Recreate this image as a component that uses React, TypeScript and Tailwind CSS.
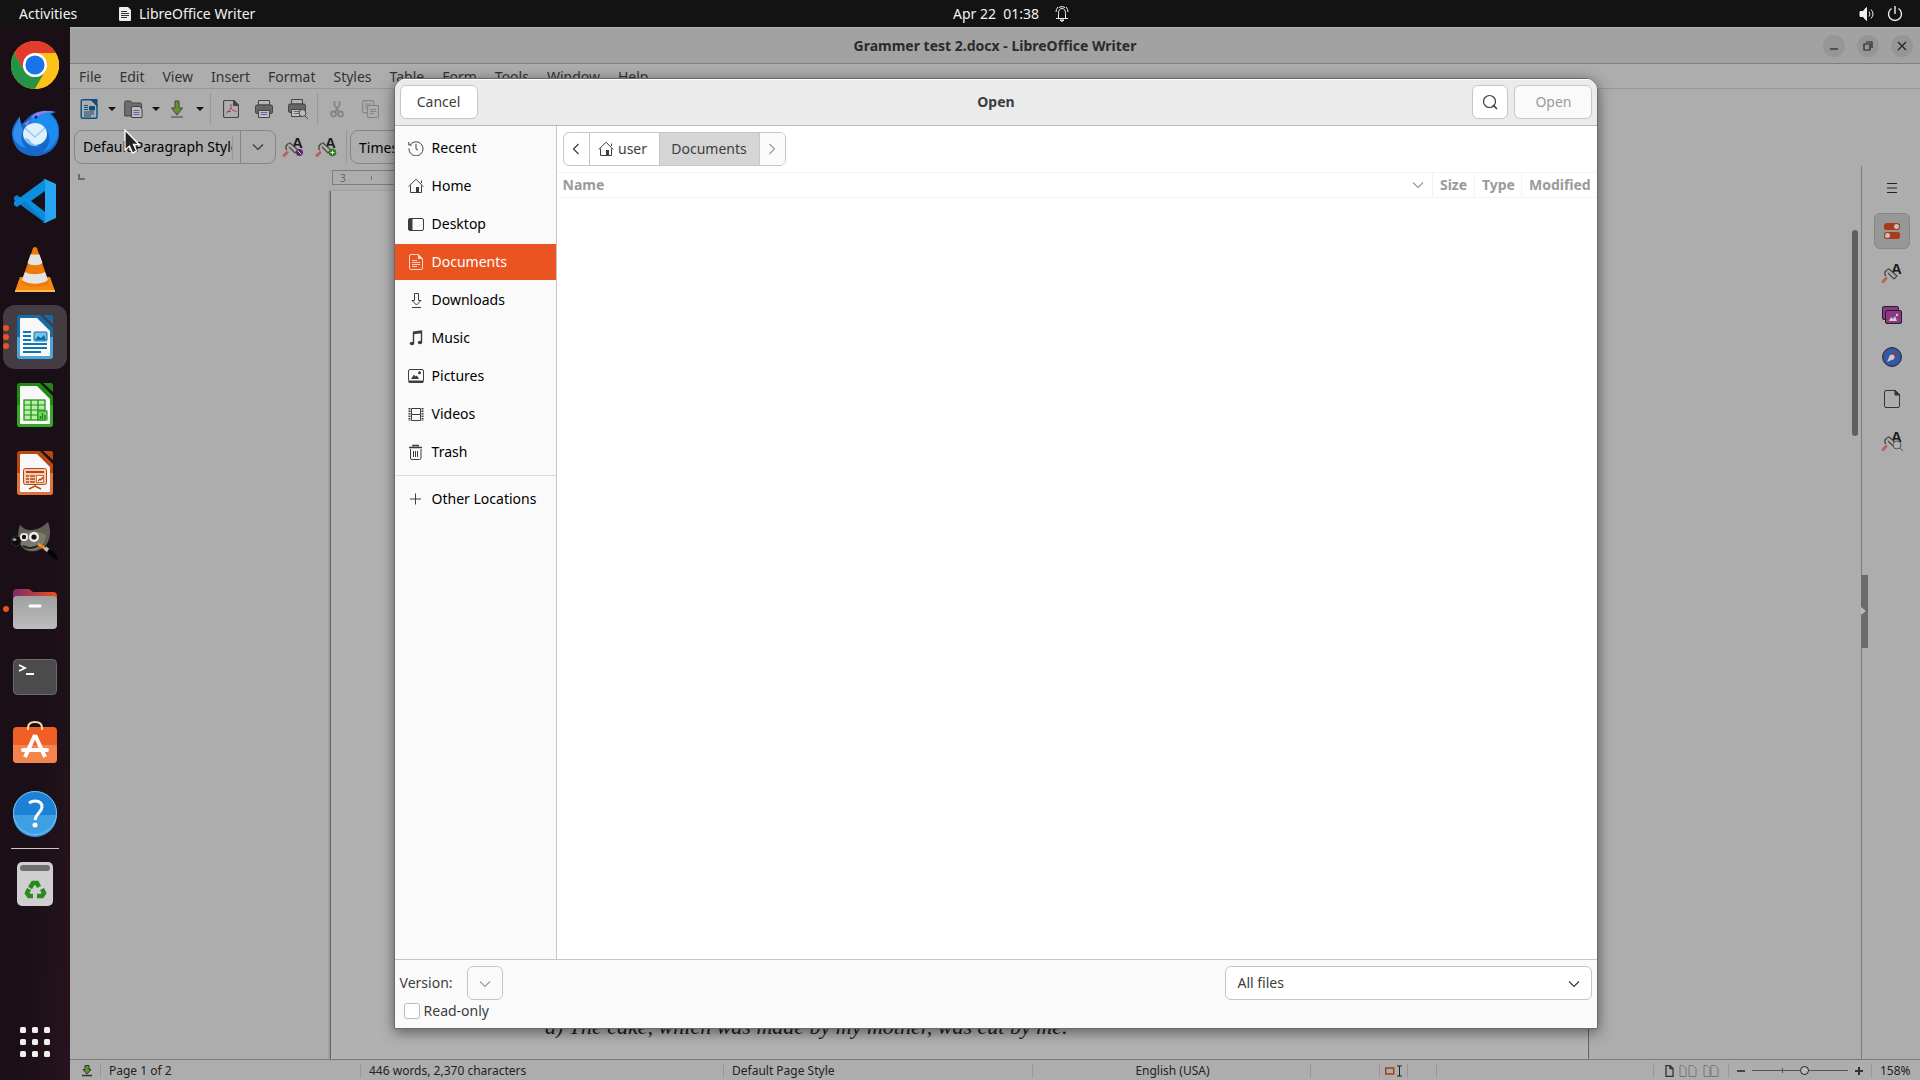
import type { ReactNode } from "react";

const menus = ["File", "Edit", "View", "Insert", "Format", "Styles", "Table", "Form", "Tools", "Window", "Help"];

/* ---------- dock icons, 48x48 ---------- */

const Chrome = () => (
  <svg viewBox="0 0 48 48" className="size-12">
    <circle cx="24" cy="24" r="24" fill="#fbbc05" />
    <path d="M3.2 12A24 24 0 0 1 44.8 12H24a12 12 0 0 0-10.4 18z" fill="#e33b2e" />
    <path d="M3.2 12A24 24 0 0 0 24 48L34.4 30A12 12 0 0 1 13.6 30z" fill="#269447" />
    <path d="M24 12H44.8A24 24 0 0 1 24 48L34.4 30A12 12 0 0 0 24 12z" fill="#fdc21a" />
    <circle cx="24" cy="24" r="12" fill="#fff" />
    <circle cx="24" cy="24" r="9.6" fill="#1a73e8" />
  </svg>
);

const Thunderbird = () => (
  <svg viewBox="0 0 48 48" className="size-12">
    <path d="M1 26C0 19 5 12 9 7c0 4 0 6 2 8l8-8C26 1 36 1 45 3l-5 2c7 5 9 14 8 21-1 13-12 21-24 21C11 47 2 39 1 26z" fill="#1669c9" />
    <path d="M20 10c5-7 15-9 24-7l-6 2c8 5 10 14 9 21-1 8-8 15-15 17 6-5 8-13 5-20-3-6-8-9-17-9z" fill="#1d8cf0" />
    <path d="M20 9c4-7 14-8 24-6-7 0-14 1-18 5z" fill="#9b7bf0" />
    <path d="M2 26c1-8 4-13 7-17 0 5 1 9 3 12-3 6-2 13 3 18C7 37 3 32 2 26z" fill="#2f8ff0" />
    <path d="M13 15l7-5-4 7z" fill="#8f7df0" />
    <circle cx="25" cy="8" r="1.6" fill="#0b2b5c" />
    <ellipse cx="24" cy="25" rx="12" ry="11" fill="#dff0fd" />
    <path d="M14 19l10 9 10-9" fill="none" stroke="#9cc8ee" strokeWidth="1.6" />
    <path d="M13 29c2 6 8 9 15 8-7-2-9-4-10-7z" fill="#7cc4f8" />
  </svg>
);

const VsCode = () => (
  <svg viewBox="0 0 48 48" className="size-12">
    <path d="M35 3L14 24 6 18l-3 2v3l30 22 2 1z" fill="#0a7fcb" />
    <path d="M35 45L14 24l-8 6-3-2v-3L33 3l2-1z" fill="#0a8fdd" />
    <path d="M34 14L20 24l14 11z" fill="#1a0f17" />
    <path d="M34 2l11 5v34l-11 5c-1 0-2 0-3-1 2 1 4 0 4-2V5c0-2-2-3-4-2 1-1 2-1 3-1z" fill="#27a4f2" />
    <path d="M34 3h1v42h-1z" fill="#27a4f2" />
  </svg>
);

const Vlc = () => (
  <svg viewBox="0 0 48 48" className="size-12">
    <path d="M9 32h30l5 14H4z" fill="#f58a12" />
    <path d="M4 45h40v2H4z" fill="#ffb84d" />
    <path d="M22 3q2-2 4 0l12 35c-5 5-23 5-28 0z" fill="#ee7a0a" />
    <path d="M19.500 9.500h9l3 8.500c-4 3-11 3-15 0z" fill="#e4e4e4" />
    <path d="M14 27c5 3 15 3 20 0l3 8c-6 5-20 5-26 0z" fill="#e4e4e4" />
  </svg>
);

type DocProps = { dark: string; light: string; children: ReactNode };

const OfficeDoc = ({ dark, light, children }: DocProps) => (
  <svg viewBox="0 0 48 48" className="size-12">
    <path d="M9 2h20l13 13v28q0 3-3 3H9q-3 0-3-3V5q0-3 3-3z" fill={dark} />
    <path d="M6 24h36v19q0 3-3 3H9q-3 0-3-3z" fill={light} />
    <path d="M10 5h16l13 13v24q0 1-1 1H10q-1 0-1-1V6q0-1 1-1z" fill="#f8f8f8" />
    <path d="M32 2h8q2 0 2 2v7z" fill={dark} />
    {children}
  </svg>
);

const Writer = () => (
  <OfficeDoc dark="#0f6ea8" light="#4aa5dc">
    <path d="M12 19h8M12 23h8M12 27h8M12 31h24M12 35h24M12 39h18" stroke="#0f75b5" strokeWidth="2" />
    <rect x="23" y="19" width="13" height="9" rx="1" fill="#78c0ea" stroke="#0f6ea8" />
    <path d="M24 27l3-4 3 2 3-3 2 5z" fill="#0f6ea8" />
  </OfficeDoc>
);

const Calc = () => (
  <OfficeDoc dark="#1f8a14" light="#35a824">
    <rect x="13" y="19" width="21" height="20" fill="#b4f0a6" stroke="#1f8a14" strokeWidth="1.2" />
    <path d="M13 24h21M13 29h21M13 34h21M20 19v20M27 19v20" stroke="#1f8a14" strokeWidth="1.2" />
    <rect x="27" y="30" width="9" height="9" fill="#7ed66c" stroke="#1f8a14" />
    <path d="M29.500 38v-3M31.500 38v-6M34 38v-4" stroke="#1f8a14" strokeWidth="1.500" />
  </OfficeDoc>
);

const Impress = () => (
  <OfficeDoc dark="#b8480f" light="#e27338">
    <rect x="12.500" y="19.500" width="23" height="16" rx="2" fill="#f6c9b0" stroke="#b04a12" />
    <path d="M15 23h18" stroke="#b04a12" strokeWidth="2" />
    <path d="M15 27h3M19 27h5M15 30h3M19 30h5M15 33h3M19 33h5" stroke="#b04a12" strokeWidth="1.600" />
    <rect x="25.500" y="26.500" width="7" height="7" fill="#fff" stroke="#d06a30" />
    <path d="M27 32l2-2 1 1 2-3M24 36v2M18 40l6-3 6 3" fill="none" stroke="#b04a12" strokeWidth="1.400" />
  </OfficeDoc>
);

const Gimp = () => (
  <svg viewBox="0 0 48 48" className="size-12">
    <path d="M9 8c3 3 6 5 10 5 6 0 12-2 18-8 3 8 3 17-2 23-6 7-16 8-22 4-5-4-8-13-4-24z" fill="#635f55" />
    <path d="M12 17c8-4 16-3 23 1-1 9-5 13-11 15-6 1-12-2-14-6z" fill="#7c786c" />
    <ellipse cx="5" cy="24" rx="5" ry="5" fill="#0c0c0c" stroke="#444" strokeWidth=".6" />
    <ellipse cx="3.500" cy="22.500" rx="2" ry="1.500" fill="#8d989e" />
    <circle cx="13" cy="20" r="4" fill="#eee" />
    <circle cx="23" cy="20" r="5" fill="#eee" />
    <circle cx="13" cy="20" r="2.200" fill="#111" />
    <circle cx="23" cy="20" r="2.600" fill="#111" />
    <path d="M12 29c6 3 12 2 16-1" stroke="#222" strokeWidth="2" fill="none" />
    <path d="M27 27l8 5" stroke="#ee8a1a" strokeWidth="3" />
    <path d="M34 31l5 4" stroke="#bdbdbd" strokeWidth="4" />
    <path d="M38 32c4 1 8 5 9 11-5-1-9-4-11-8z" fill="#050505" />
  </svg>
);

const Files = () => (
  <svg viewBox="0 0 48 48" className="size-12">
    <defs>
      <linearGradient id="tab">
        <stop offset="0" stopColor="#7d2c63" />
        <stop offset="1" stopColor="#e9521f" />
      </linearGradient>
      <linearGradient id="front" x2="0" y2="1">
        <stop offset="0" stopColor="#a0a0a0" />
        <stop offset="1" stopColor="#bdbdbd" />
      </linearGradient>
    </defs>
    <path d="M2 20V8q0-4 4-4h12l4 3h20q4 0 4 4v10z" fill="url(#tab)" />
    <rect x="2" y="11" width="44" height="33" rx="4" fill="url(#front)" />
    <path d="M19 21h10" stroke="#fff" strokeWidth="3" strokeLinecap="round" />
  </svg>
);

const Terminal = () => (
  <svg viewBox="0 0 48 48" className="size-12">
    <rect x="2.500" y="6.500" width="43" height="35" rx="4" fill="#4b4b4b" stroke="#6c6c6c" />
    <path d="M8 12l6 3-6 3M15 21h8" fill="none" stroke="#fff" strokeWidth="1.800" />
  </svg>
);

const Software = () => (
  <svg viewBox="0 0 48 48" className="size-12">
    <path d="M6 6h36q4 0 4 4v28q0 4-4 4H6q-4 0-4-4V10q0-4 4-4z" fill="#f06024" />
    <path d="M2 24h44v14q0 4-4 4H6q-4 0-4-4z" fill="#f5834d" />
    <path d="M17 9V7q0-6 7-6t7 6v2" fill="none" stroke="#f5dca6" strokeWidth="2" />
    <path d="M24 14L14 36M24 14l10 22" stroke="#fff" strokeWidth="4" />
    <path d="M12 29h24" stroke="#fff" strokeWidth="4" strokeLinecap="round" />
  </svg>
);

const HelpIcon = () => (
  <svg viewBox="0 0 48 48" className="size-12">
    <circle cx="24" cy="24" r="22" fill="#1c82d8" />
    <path d="M2 26h44a22 22 0 0 1-44 0z" fill="#3f9fe3" />
    <circle cx="24" cy="24" r="21.500" fill="none" stroke="#7cc0ef" />
    <path d="M18 14q3-2 6-2 7 0 7 6c0 5-6 6-7 13" fill="none" stroke="#fff" strokeWidth="3" />
    <circle cx="24" cy="36" r="2.500" fill="#fff" />
  </svg>
);

const TrashCan = () => (
  <svg viewBox="0 0 48 48" className="size-12">
    <rect x="6" y="1" width="36" height="44" rx="5" fill="#cfcfcf" />
    <rect x="9" y="4" width="30" height="6" rx="3" fill="#6e6e6e" />
    <g fill="none" stroke="#2a8a1e" strokeWidth="4.500">
      <path d="M19 27l3-5h4l2 4" />
      <path d="M31 28l2 4-2 3h-5" />
      <path d="M22 35h-4l-2-3 2-4" />
    </g>
  </svg>
);

const AppGrid = () => (
  <svg viewBox="0 0 30 30" className="size-[30px]" fill="#f2f0ee">
    {[0, 12, 24].map((y) => [0, 12, 24].map((x) => <rect key={`${x}-${y}`} x={x} y={y} width="6" height="6" rx="1.500" />))}
  </svg>
);

const dock = [
  { name: "Google Chrome", icon: <Chrome /> },
  { name: "Thunderbird Mail", icon: <Thunderbird /> },
  { name: "Visual Studio Code", icon: <VsCode /> },
  { name: "VLC media player", icon: <Vlc /> },
  { name: "LibreOffice Writer", icon: <Writer />, windows: 3, active: true },
  { name: "LibreOffice Calc", icon: <Calc /> },
  { name: "LibreOffice Impress", icon: <Impress /> },
  { name: "GIMP", icon: <Gimp /> },
  { name: "Files", icon: <Files />, windows: 1 },
  { name: "Terminal", icon: <Terminal /> },
  { name: "Ubuntu Software", icon: <Software /> },
  { name: "Help", icon: <HelpIcon /> },
];

/* ---------- small shared icons ---------- */

const Chevron = ({ className }: { className: string }) => (
  <svg viewBox="0 0 12 8" className={className} fill="none" stroke="currentColor" strokeWidth="1.200">
    <path d="M1 1.500l5 5 5-5" />
  </svg>
);

const HomeIcon = () => (
  <svg viewBox="0 0 16 16" className="size-4 shrink-0" fill="none" stroke="currentColor">
    <path d="M.7 8.500L8 1.200l7.300 7.300M2.500 7.500v7h11v-7M13.500 5V2.500" />
    <path d="M8 9h3v5.500H8z" fill="currentColor" stroke="none" />
  </svg>
);

const Caret = () => (
  <svg viewBox="0 0 8 4" className="h-1 w-2" fill="#111">
    <path d="M0 0h8L4 4z" />
  </svg>
);

/* brush with a capital letter, shared by the style buttons */
const StyleIcon = ({ children }: { children?: ReactNode }) => (
  <svg viewBox="0 0 24 24" className="size-6">
    <text x="11" y="13" fontSize="15" fontWeight="700" fontFamily="Liberation Sans, sans-serif" fill="#1c1c1c">A</text>
    <path d="M3 20.500l3-3" stroke="#b5655a" strokeWidth="3" strokeLinecap="round" />
    <path d="M6 15c-3-2 0-6 3-7l8 7-3 3-6-6" fill="#adadad" stroke="#444" strokeWidth="1.200" />
    <path d="M5 14c-2-3 1-6 4-6" fill="none" stroke="#666" />
    {children}
  </svg>
);

const places = [
  {
    name: "Recent",
    icon: <path d="M2.500 4.500A7 7 0 1 1 1 8.500M.8 2v3h3M8 4v5l2 1" />,
  },
  {
    name: "Home",
    icon: (
      <>
        <path d="M.7 8.500L8 1.200l7.300 7.300M2.500 7.500v7h11v-7M13.500 5V2.500" />
        <path d="M8 9h3v5.500H8z" fill="currentColor" stroke="none" />
      </>
    ),
  },
  {
    name: "Desktop",
    icon: (
      <>
        <rect x=".5" y="2.500" width="15" height="12" rx="1.500" />
        <path d="M1 3h3v11H1z" fill="currentColor" />
      </>
    ),
  },
  {
    name: "Documents",
    active: true,
    icon: (
      <>
        <path d="M3 .5h7.500l4 4V14q0 1.500-1.500 1.500H3Q1.500 15.500 1.500 14V2Q1.500.5 3 .5zM4 6.500h5M4 8.500h8M4 10.500h8M4 12.500h5" />
        <path d="M10 0l5 5h-5z" fill="currentColor" stroke="none" />
      </>
    ),
  },
  {
    name: "Downloads",
    icon: <path d="M6.500 1.500h4v7H13l-4.500 4.500L4 8.500h2.500zM4 15.500h9" />,
  },
  {
    name: "Music",
    icon: (
      <>
        <path d="M5.500 13V2l8-1v11M5.500 3.500l8-1" strokeWidth="1.400" />
        <ellipse cx="4" cy="13.500" rx="2.200" ry="1.800" fill="currentColor" stroke="none" />
        <ellipse cx="12" cy="12.500" rx="2.200" ry="1.800" fill="currentColor" stroke="none" />
      </>
    ),
  },
  {
    name: "Pictures",
    icon: (
      <>
        <rect x=".5" y="1.500" width="15" height="12.500" rx="1.500" />
        <path d="M1 13h14v1.500H1z" fill="currentColor" />
        <path d="M3 11l3-4.500 1.500 2L9 7.500l2 3.500z" fill="currentColor" stroke="none" />
        <circle cx="11.500" cy="4.800" r="1.500" fill="currentColor" stroke="none" />
      </>
    ),
  },
  {
    name: "Videos",
    icon: (
      <>
        <path d="M3.500 2.500h9v12h-9zM3.500 8.500h9" />
        <path d="M1.500 2v13M14.500 2v13" strokeDasharray="1.500 1" strokeWidth="2" />
      </>
    ),
  },
  {
    name: "Trash",
    icon: (
      <>
        <path d="M2.500 5v9q0 1.500 1.500 1.500h7.500q1.500 0 1.500-1.500V5M5.500 7v6M7.500 7v6M9.500 7v6" />
        <path d="M1 3.500h13M5 2.500v-1h5v1" strokeWidth="1.600" />
      </>
    ),
  },
];

function TopBar() {
  return (
    <header className="grid h-[27px] shrink-0 grid-cols-3 items-center bg-[#131313] text-[#f2f2f2]">
      <div className="flex items-center pl-[19px]">
        <button className="w-[100px] text-left">Activities</button>
        <button className="flex items-center gap-2">
          <svg viewBox="0 0 12 14" className="h-[14px] w-3">
            <path d="M1 0h8l3 3v10q0 1-1 1H1q-1 0-1-1V1q0-1 1-1z" fill="#eee" />
            <path d="M2 4.500h6M2 6.500h8M2 8.500h8M2 10.500h6" stroke="#333" />
          </svg>
          LibreOffice Writer
        </button>
      </div>
      <button className="flex items-center gap-4 justify-self-center pl-[102px]">
        <time className="whitespace-pre">Apr 22  01:38</time>
        <svg viewBox="0 0 14 16" className="h-4 w-[14px]" fill="none" stroke="#eee">
          <path d="M3.500 12V7.500q0-5 3.500-5t3.500 5V12M1 12.500h12M1 6q0-3 2-5M13 6q0-3-2-5M4 1.500Q7-.5 10 1.500" />
          <path d="M5 14h4l-2 1.500z" fill="#eee" />
        </svg>
      </button>
      <div className="flex items-center gap-3 justify-self-end pr-[17px]">
        <svg viewBox="0 0 16 16" className="size-4" fill="none" stroke="#eee" aria-label="Volume">
          <path d="M1 5.500h3l3.500-4v13l-3.500-4H1z" fill="#f2f2f2" />
          <path d="M10 5.500q2 2.500 0 5M12 3.500q4 4.500 0 9" />
        </svg>
        <svg viewBox="0 0 16 16" className="size-4" fill="none" stroke="#eee" strokeWidth="1.400" aria-label="Power">
          <path d="M4.500 2.500a6.500 6.500 0 1 0 7 0M8 0v8" />
        </svg>
      </div>
    </header>
  );
}

function Dock() {
  return (
    <nav className="flex w-[70px] shrink-0 flex-col items-center bg-linear-to-br from-[#1a0f16] from-60% to-[#27131f] py-[6px]">
      <div className="flex flex-col gap-1">
        {dock.map((app) => (
          <button
            key={app.name}
            aria-label={app.name}
            className={`relative flex size-16 items-center justify-center rounded-xl ${app.active ? "bg-[#433c42]" : ""}`}
          >
            {app.icon}
            {app.windows && (
              <span className="absolute top-0 left-0 flex h-full flex-col justify-center gap-[3px]">
                {Array.from({ length: app.windows }, (_, i) => (
                  <i key={i} className="size-[6px] rounded-full bg-[#e95420]" />
                ))}
              </span>
            )}
          </button>
        ))}
      </div>
      <hr className="mt-[3px] w-12 border-[#c9c5c8]" />
      <button aria-label="Trash" className="mt-1 flex size-16 items-center justify-center">
        <TrashCan />
      </button>
      <button aria-label="Show Applications" className="mt-auto flex size-16 items-center justify-center">
        <AppGrid />
      </button>
    </nav>
  );
}

const Divider = () => <span className="h-8 w-px bg-[#979797]" />;

function Toolbars() {
  return (
    <div className="shrink-0">
      <div className="flex h-[39px] items-center pl-[10px]">
        <button aria-label="New" className="w-[27px]">
          <svg viewBox="0 0 18 20" className="h-5 w-[18px]" fill="none" stroke="#0b4f7c">
            <path d="M3 .7h9l5 5V18q0 1.300-1.300 1.300H3Q1.200 19.300 1.200 18V2Q1.200.7 3 .7z" strokeWidth="1.400" />
            <path d="M10 0h7v7z" fill="#0b4f7c" />
            <path d="M4 6.500h4M4 8.500h4M4 10.500h4M4 13h10M4 15h10M4 17h7" />
            <path d="M9.500 7.500h5v3.500h-5z" fill="#0b4f7c" />
          </svg>
        </button>
        <button aria-label="New options" className="w-[17px] pl-px"><Caret /></button>
        <button aria-label="Open" className="w-[27px]">
          <svg viewBox="0 0 19 18" className="h-[18px] w-[19px]" stroke="#444">
            <path d="M.7 16V2.500Q.7 1 2 1h4.500l2 2h7.500q1.500 0 1.500 1.500V16z" fill="#6e6e6e" />
            <path d="M7.500 6.500h8l2.500 2.500v8.500H7.500z" fill="#bcbcbc" />
            <path d="M9.500 10.500h6M9.500 12.500h6M9.500 14.500h6" stroke="#6461a0" />
          </svg>
        </button>
        <button aria-label="Open options" className="w-[20px] pl-px"><Caret /></button>
        <button aria-label="Save" className="w-[24px]">
          <svg viewBox="0 0 12 18" className="h-[18px] w-3" stroke="#444">
            <path d="M4 1h4v7h3.500L6 15 .5 8H4z" fill="#64922b" />
            <path d="M0 17h12" />
          </svg>
        </button>
        <button aria-label="Save options" className="w-[15px] pl-px"><Caret /></button>
        <Divider />
        <button aria-label="Export as PDF" className="ml-3 w-8">
          <svg viewBox="0 0 16 18" className="h-[18px] w-4" fill="none" stroke="#444">
            <path d="M2 .5h9l4.500 4.500V16q0 1.500-1.500 1.500H2Q.5 17.500.5 16V2Q.5.500 2 .5z" strokeWidth="1.200" />
            <path d="M10.500.5v5h5z" fill="#444" />
            <path d="M8 4v4l-4.500 5.500M8 8q1 3 5.500 3.500M4 11.500h4" stroke="#b23a48" />
          </svg>
        </button>
        <button aria-label="Print" className="w-[33px]">
          <svg viewBox="0 0 18 18" className="size-[18px]" stroke="#444">
            <path d="M3.500.5h11V5h-11z" fill="#b5b5b5" />
            <rect x=".5" y="5" width="17" height="8.500" rx="1.500" fill="#666" />
            <path d="M3.500 10.500h11v7h-11z" fill="#c4c4c4" />
            <path d="M5.500 12.500h7M5.500 14.500h7" stroke="#6461a0" />
          </svg>
        </button>
        <button aria-label="Print preview" className="w-[29px]">
          <svg viewBox="0 0 21 20" className="h-5 w-[21px]" stroke="#444">
            <path d="M3.500.5h11V5h-11z" fill="#b5b5b5" />
            <rect x=".5" y="5" width="17" height="8.500" rx="1.500" fill="#666" />
            <path d="M3.500 10.500h11v7h-11z" fill="#c4c4c4" />
            <path d="M5.500 12.500h6M5.500 14.500h6" stroke="#6461a0" />
            <circle cx="14.500" cy="14" r="3.500" fill="#bbb" />
            <path d="M17 17l3 3" />
          </svg>
        </button>
        <Divider />
        <button aria-label="Cut" className="ml-3 w-8">
          <svg viewBox="0 0 14 18" className="h-[18px] w-[14px]" fill="none" stroke="#858585" strokeWidth="1.800">
            <path d="M4.500 1v4l5 8M9.500 1v4l-5 8" />
            <circle cx="3.500" cy="14" r="2.500" />
            <circle cx="10.500" cy="14" r="2.500" />
          </svg>
        </button>
        <button aria-label="Copy">
          <svg viewBox="0 0 17 18" className="h-[18px] w-[17px]" fill="#adadad" stroke="#858585" strokeWidth="1.200">
            <rect x=".6" y=".6" width="11" height="12" rx="1.500" />
            <path d="M3 4h6M3 6h3M3 8h3" />
            <rect x="5.500" y="5.500" width="11" height="12" rx="1.500" />
            <path d="M8 9.500h6M8 11.500h6M8 13.500h4" />
          </svg>
        </button>
      </div>

      <div className="flex h-[38px] items-start pt-[2px] pl-1">
        <div className="flex h-[34px] w-[202px] rounded-lg border border-[#858585]">
          <input
            aria-label="Paragraph style"
            defaultValue="Default Paragraph Style"
            className="my-1 ml-2 w-[150px] border-r border-[#979797] text-black outline-none"
          />
          <button aria-label="Show styles" className="ml-[7px] flex flex-1 items-center justify-center border-l border-[#858585] text-[#333]">
            <Chevron className="h-2 w-3" />
          </button>
        </div>
        <div className="flex h-[34px] items-center gap-[9px] px-[5px]">
          <button aria-label="Update style">
            <StyleIcon>
              <circle cx="18.500" cy="17.500" r="3.500" fill="#5e2663" />
              <path d="M16.500 15.500l4 4" stroke="#d8c8da" />
            </StyleIcon>
          </button>
          <button aria-label="New style">
            <StyleIcon>
              <circle cx="18.500" cy="17.500" r="3.800" fill="#2f7d1c" />
              <path d="M16.500 17.500h4M18.500 15.500v4" stroke="#e4f0e0" />
            </StyleIcon>
          </button>
        </div>
        <span className="mx-[3px] h-[34px] w-px bg-[#979797]" />
        <input
          aria-label="Font name"
          defaultValue="Times New Roman"
          className="h-[34px] w-[220px] rounded-lg border border-[#858585] px-2 text-black outline-none"
        />
      </div>
    </div>
  );
}

function SideDeck() {
  return (
    <aside className="flex w-[59px] shrink-0 flex-col items-center gap-[6px] border-l border-[#7b7b7b] pt-1 pl-[2px]">
      <button aria-label="Sidebar settings" className="mb-[2px] flex h-[35px] w-9 items-center justify-center">
        <svg viewBox="0 0 10 10" className="size-[10px]" stroke="#222">
          <path d="M0 .5h10M0 5h10M0 9.500h10" />
        </svg>
      </button>
      <button aria-label="Properties" className="flex size-9 items-center justify-center rounded-md border border-[#868686] bg-[#979797]">
        <svg viewBox="0 0 16 16" className="size-4">
          <rect y="0" width="16" height="7" rx="2.500" fill="#a83c18" />
          <rect y="9" width="16" height="7" rx="2.500" fill="#a83c18" />
          <circle cx="12.500" cy="3.500" r="2.500" fill="#c4c0be" />
          <circle cx="3.500" cy="12.500" r="2.500" fill="#c4c0be" />
        </svg>
      </button>
      <button aria-label="Styles" className="flex size-9 items-center justify-center"><StyleIcon /></button>
      <button aria-label="Gallery" className="flex size-9 items-center justify-center">
        <svg viewBox="0 0 20 18" className="h-[18px] w-5" fill="#8d3885" stroke="#222">
          <rect x=".5" y=".5" width="16" height="13" rx="1.500" />
          <rect x="3.500" y="4.500" width="16" height="13" rx="1.500" />
          <path d="M7 15l2-4 2 2 2-3 2 5z" fill="#d8c8d6" stroke="none" />
          <circle cx="15" cy="9" r="1.200" fill="#d8c8d6" stroke="none" />
        </svg>
      </button>
      <button aria-label="Navigator" className="flex size-9 items-center justify-center">
        <svg viewBox="0 0 20 20" className="size-5">
          <circle cx="10" cy="10" r="9.400" fill="#3457a6" stroke="#222" />
          <path d="M5 15l3-7 4 4z" fill="#c8c8c8" />
          <path d="M15 5l-7 3 4 4z" fill="#a8323c" />
          <circle cx="10" cy="10" r="2.500" fill="#c8c8c8" />
        </svg>
      </button>
      <button aria-label="Page" className="flex size-9 items-center justify-center">
        <svg viewBox="0 0 16 18" className="h-[18px] w-4" fill="none" stroke="#333">
          <path d="M2 .5h9l4.500 4.500V16q0 1.500-1.500 1.500H2Q.5 17.500.5 16V2Q.5.500 2 .5z" />
          <path d="M11 0v5h5z" fill="#333" />
        </svg>
      </button>
      <button aria-label="Style inspector" className="flex size-9 items-center justify-center">
        <StyleIcon>
          <circle cx="17" cy="16" r="4" fill="#b0b0b0" stroke="#555" />
          <path d="M20 19l3 3" stroke="#555" />
        </StyleIcon>
      </button>
    </aside>
  );
}

function Workspace() {
  return (
    <div className="flex min-h-0 flex-1">
      <div className="flex min-w-0 flex-1 flex-col">
        <div className="flex h-[25px] shrink-0 items-start pt-1 pl-2">
          <span className="mt-1 h-[6px] w-[7px] border-b-2 border-l-2 border-[#6b6b6b]" />
          <div className="mr-[272px] ml-[247px] flex h-[15px] flex-1 items-center border border-[#7d7d7d] pl-[7px] text-[10px] text-[#666]">
            3<span className="ml-[25px] h-1 w-px bg-[#777]" />
          </div>
        </div>
        <div className="flex min-h-0 flex-1">
          <article className="mr-[272px] ml-[260px] flex flex-1 items-end border-x border-[#666] bg-[#b1b1b1] pb-[18px] pl-[214px] font-['Liberation_Serif',serif] text-[22px] leading-7 text-[#1a1a1a] shadow-[-1px_0_2px_rgba(0,0,0,0.2)]">
            <p className="italic">a) The cake, which was made by my mother, was cut by me.</p>
          </article>
          <div className="-ml-[9px] w-[6px] pt-[39px]">
            <div className="h-[206px] w-[6px] rounded-sm bg-[#5f5f5f]" />
          </div>
        </div>
      </div>
      <div className="ml-[3px] flex">
        <SideDeck />
      </div>
    </div>
  );
}

function StatusBar() {
  return (
    <footer className="flex h-[21px] shrink-0 items-center border-t border-[#7b7b7b] pt-px text-[12px] text-[#222]">
      <div className="flex h-[15px] w-[31px] items-center justify-center border-r border-[#979797] pl-1">
        <svg viewBox="0 0 10 12" className="h-3 w-[10px]" stroke="#333">
          <path d="M3 .5h4v4h2L5 9 1 4.500h2z" fill="#64922b" />
          <path d="M0 10.500h10" strokeWidth="1.500" />
        </svg>
      </div>
      <div className="flex h-[15px] w-[260px] items-center border-r border-[#979797] pl-2">Page 1 of 2</div>
      <div className="flex h-[15px] w-[363px] items-center border-r border-[#979797] pl-2">446 words, 2,370 characters</div>
      <div className="flex h-[15px] w-[309px] items-center border-r border-[#979797] pl-2">Default Page Style</div>
      <div className="flex h-[15px] w-[278px] items-center justify-center border-r border-[#979797] pl-[2px]">English (USA)</div>
      <div className="h-[15px] w-[69px] border-r border-[#979797]" />
      <div className="flex h-[15px] w-7 items-center justify-center border-r border-[#979797]">
        <svg viewBox="0 0 18 12" className="h-3 w-[18px]" fill="none">
          <path d="M.7 3h8v6h-8z" stroke="#a83c18" strokeWidth="1.400" />
          <path d="M12 1h5M12 11h5M14.500 1v10" stroke="#222" />
        </svg>
      </div>
      <div className="h-[15px] w-[29px] border-r border-[#979797]" />
      <div className="ml-auto flex h-[15px] items-center border-l border-[#979797] px-[9px]">
        <svg viewBox="0 0 56 12" className="h-3 w-14" fill="none" stroke="#333">
          <path d="M3 .5h4l3 3v8H3zM7 .5v3h3" strokeWidth="1.300" />
          <path d="M17 .5h3l3 3v8h-6zM26 .5h4l3 3v8h-7zM41 .5h3l3 3v8h-6zM48 .5h4l3 3v8h-7z" stroke="#777" />
        </svg>
      </div>
      <div className="flex h-[15px] items-center gap-[7px] border-x border-[#979797] px-2">
        <button aria-label="Zoom out" className="h-[2px] w-2 bg-[#444]" />
        <div className="relative flex items-center">
          <input
            type="range"
            aria-label="Zoom"
            min={0}
            max={100}
            defaultValue={55}
            className="h-px w-24 appearance-none bg-[#555] [&::-webkit-slider-thumb]:size-[9px] [&::-webkit-slider-thumb]:appearance-none [&::-webkit-slider-thumb]:rounded-full [&::-webkit-slider-thumb]:border [&::-webkit-slider-thumb]:border-[#222] [&::-webkit-slider-thumb]:bg-[#bbb]"
          />
          <span className="absolute left-[30px] h-[5px] w-px bg-[#555]" />
        </div>
        <button aria-label="Zoom in" className="flex size-2 items-center justify-center">
          <svg viewBox="0 0 8 8" className="size-2" stroke="#333" strokeWidth="2"><path d="M0 4h8M4 0v8" /></svg>
        </button>
      </div>
      <div className="w-12 pl-2">158%</div>
    </footer>
  );
}

function OpenDialog() {
  return (
    <section
      role="dialog"
      aria-label="Open"
      className="flex w-[65.2%] flex-col overflow-hidden rounded-t-xl border border-[#6a6a6a] bg-white text-[#3d3d3d] shadow-[0_3px_14px_rgba(0,0,0,0.5)]"
    >
      <div className="grid h-[47px] shrink-0 grid-cols-3 items-center border-t border-b border-t-white border-b-[#b9b9b9] bg-[#ebebeb] px-[5px] pb-[2px]">
        <button className="h-[34px] w-[78px] rounded-md border border-[#c6c6c6] bg-white">Cancel</button>
        <h2 className="text-center font-bold">Open</h2>
        <div className="flex gap-[6px] justify-self-end">
          <button aria-label="Search" className="flex h-[34px] w-9 items-center justify-center rounded-md border border-[#c6c6c6] bg-white">
            <svg viewBox="0 0 16 16" className="size-4" fill="none" stroke="#3d3d3d" strokeWidth="1.200">
              <circle cx="7.500" cy="7.500" r="6" />
              <path d="M11 11l4 4" strokeWidth="1.600" />
            </svg>
          </button>
          <button disabled className="h-[34px] w-[78px] rounded-md border border-[#c6c6c6] bg-[#fafafa] text-[#9a9a9a]">Open</button>
        </div>
      </div>

      <div className="flex min-h-0 flex-1">
        <nav className="flex w-[162px] shrink-0 flex-col border-r border-[#c6c6c6] bg-[#fafafa] pt-1">
          <ul className="flex flex-col gap-[2px]">
            {places.map((place) => (
              <li key={place.name}>
                <a
                  href="#"
                  className={`flex h-9 items-center gap-2 pl-[13px] ${place.active ? "bg-[#e95420] text-white" : "text-black"}`}
                >
                  <svg
                    viewBox="0 0 16 16"
                    className={`size-4 shrink-0 ${place.active ? "text-[#fbd5c8]" : "text-[#3d3d3d]"}`}
                    fill="none"
                    stroke="currentColor"
                  >
                    {place.icon}
                  </svg>
                  {place.name}
                </a>
              </li>
            ))}
          </ul>
          <hr className="my-[5px] border-[#dcdcdc]" />
          <a href="#" className="flex h-9 items-center gap-2 pl-[13px] text-black">
            <svg viewBox="0 0 16 16" className="size-4 shrink-0" stroke="#3d3d3d">
              <path d="M2 8h11M7.500 2.500v11" />
            </svg>
            Other Locations
          </a>
        </nav>

        <div className="min-w-0 flex-1">
          <div className="flex p-[6px]">
            <div className="flex h-[34px] overflow-hidden rounded-md border border-[#c6c6c6]">
              <button aria-label="Back" className="flex w-[25px] items-center justify-center">
                <Chevron className="h-2 w-3 rotate-90" />
              </button>
              <button className="flex w-[70px] items-center justify-center gap-1 border-l border-[#c6c6c6] pr-[3px]">
                <HomeIcon />
                user
              </button>
              <button className="w-[101px] border-x border-[#c6c6c6] bg-[#d5d5d5]">Documents</button>
              <button aria-label="Forward" className="flex w-[25px] items-center justify-center bg-[#fafafa] text-[#9a9a9a]">
                <Chevron className="h-2 w-3 -rotate-90" />
              </button>
            </div>
          </div>
          <table className="w-full table-fixed border-y border-[#f4f4f4] text-left text-[#9a9a9a]">
            <thead>
              <tr className="h-[25px]">
                <th className="pr-2 pl-[6px]">
                  <div className="flex items-center justify-between">
                    Name
                    <Chevron className="h-2 w-3" />
                  </div>
                </th>
                <th className="w-[42px] border-l border-[#f4f4f4] pl-[7px]">Size</th>
                <th className="w-[47px] border-l border-[#f4f4f4] pl-[7px]">Type</th>
                <th className="w-[76px] border-l border-[#f4f4f4] pl-[7px]">Modified</th>
              </tr>
            </thead>
          </table>
        </div>
      </div>

      <div className="flex h-[69px] shrink-0 justify-between border-t border-[#c6c6c6] bg-[#fafafa] px-[5px] pt-[6px]">
        <div>
          <div className="flex items-center">
            <label htmlFor="version" className="w-[67px]">Version:</label>
            <div className="relative h-[34px] w-9">
              <select id="version" disabled className="size-full appearance-none rounded-md border border-[#c6c6c6] bg-[#fafafa]" />
              <Chevron className="pointer-events-none absolute top-[14px] left-3 h-2 w-3 text-[#9a9a9a]" />
            </div>
          </div>
          <label className="flex items-center gap-1 pt-[1px] pl-1">
            <input type="checkbox" className="size-4 appearance-none rounded-[3px] border border-[#bcbcbc] bg-white" />
            Read-only
          </label>
        </div>
        <div className="relative h-[34px] w-[367px]">
          <select aria-label="File type" className="size-full appearance-none rounded-md border border-[#c6c6c6] bg-white pl-[11px]">
            <option>All files</option>
          </select>
          <Chevron className="pointer-events-none absolute top-[14px] right-3 h-2 w-3" />
        </div>
      </div>
    </section>
  );
}

export default function App() {
  return (
    <div className="flex h-screen flex-col overflow-hidden bg-[#131313] font-['Noto_Sans',sans-serif] text-[14px] leading-5">
      <TopBar />
      <div className="flex min-h-0 flex-1">
        <Dock />
        <main className="relative flex min-w-0 flex-1 flex-col bg-[#adadad] text-[#333]">
          <div className="grid h-[37px] shrink-0 grid-cols-[1fr_auto_1fr] items-center border-t border-b border-t-[#b4b4b4] border-b-[#7f7f7f] bg-[#a2a2a2]">
            <h1 className="col-start-2 font-bold text-[#2b2b2b]">Grammer test 2.docx - LibreOffice Writer</h1>
            <div className="flex gap-3 justify-self-end pr-[7px]">
              {["M7 14h8", "M7 9h6v6H7zM9 7h6v6", "M7 7l8 8M15 7l-8 8"].map((d, i) => (
                <button
                  key={d}
                  aria-label={["Minimize", "Restore", "Close"][i]}
                  className="size-[22px] rounded-full bg-[#969696]"
                >
                  <svg viewBox="0 0 22 22" className="size-full" fill="none" stroke="#222" strokeWidth="1.200">
                    <path d={d} />
                  </svg>
                </button>
              ))}
            </div>
          </div>
          <nav className="flex h-[25px] shrink-0 items-center border-b border-[#979797] pt-[2px]">
            {menus.map((menu) => (
              <button key={menu} className="px-[9px]">{menu}</button>
            ))}
          </nav>
          <Toolbars />
          <Workspace />
          <StatusBar />

          {/* handle that folds the sidebar */}
          <button
            aria-label="Hide sidebar"
            className="absolute top-[52%] right-[52px] flex h-[73px] w-[7px] items-center bg-[#6b6b6b]"
          >
            <svg viewBox="0 0 5 8" className="h-2 w-[5px]" fill="#bbb"><path d="M0 0l5 4-5 4z" /></svg>
          </button>

          <div className="absolute inset-x-0 top-[51px] bottom-[51px] flex justify-center pl-[2px]">
            <OpenDialog />
          </div>
        </main>
      </div>

      {/* mouse pointer */}
      <svg viewBox="0 0 16 26" className="pointer-events-none absolute top-[129px] left-[124px] h-[26px] w-4">
        <path d="M1 1v20l4.500-4 3 7 4-2-3-6.500H15z" fill="#222" stroke="#fff" strokeWidth="1.300" />
      </svg>
    </div>
  );
}
